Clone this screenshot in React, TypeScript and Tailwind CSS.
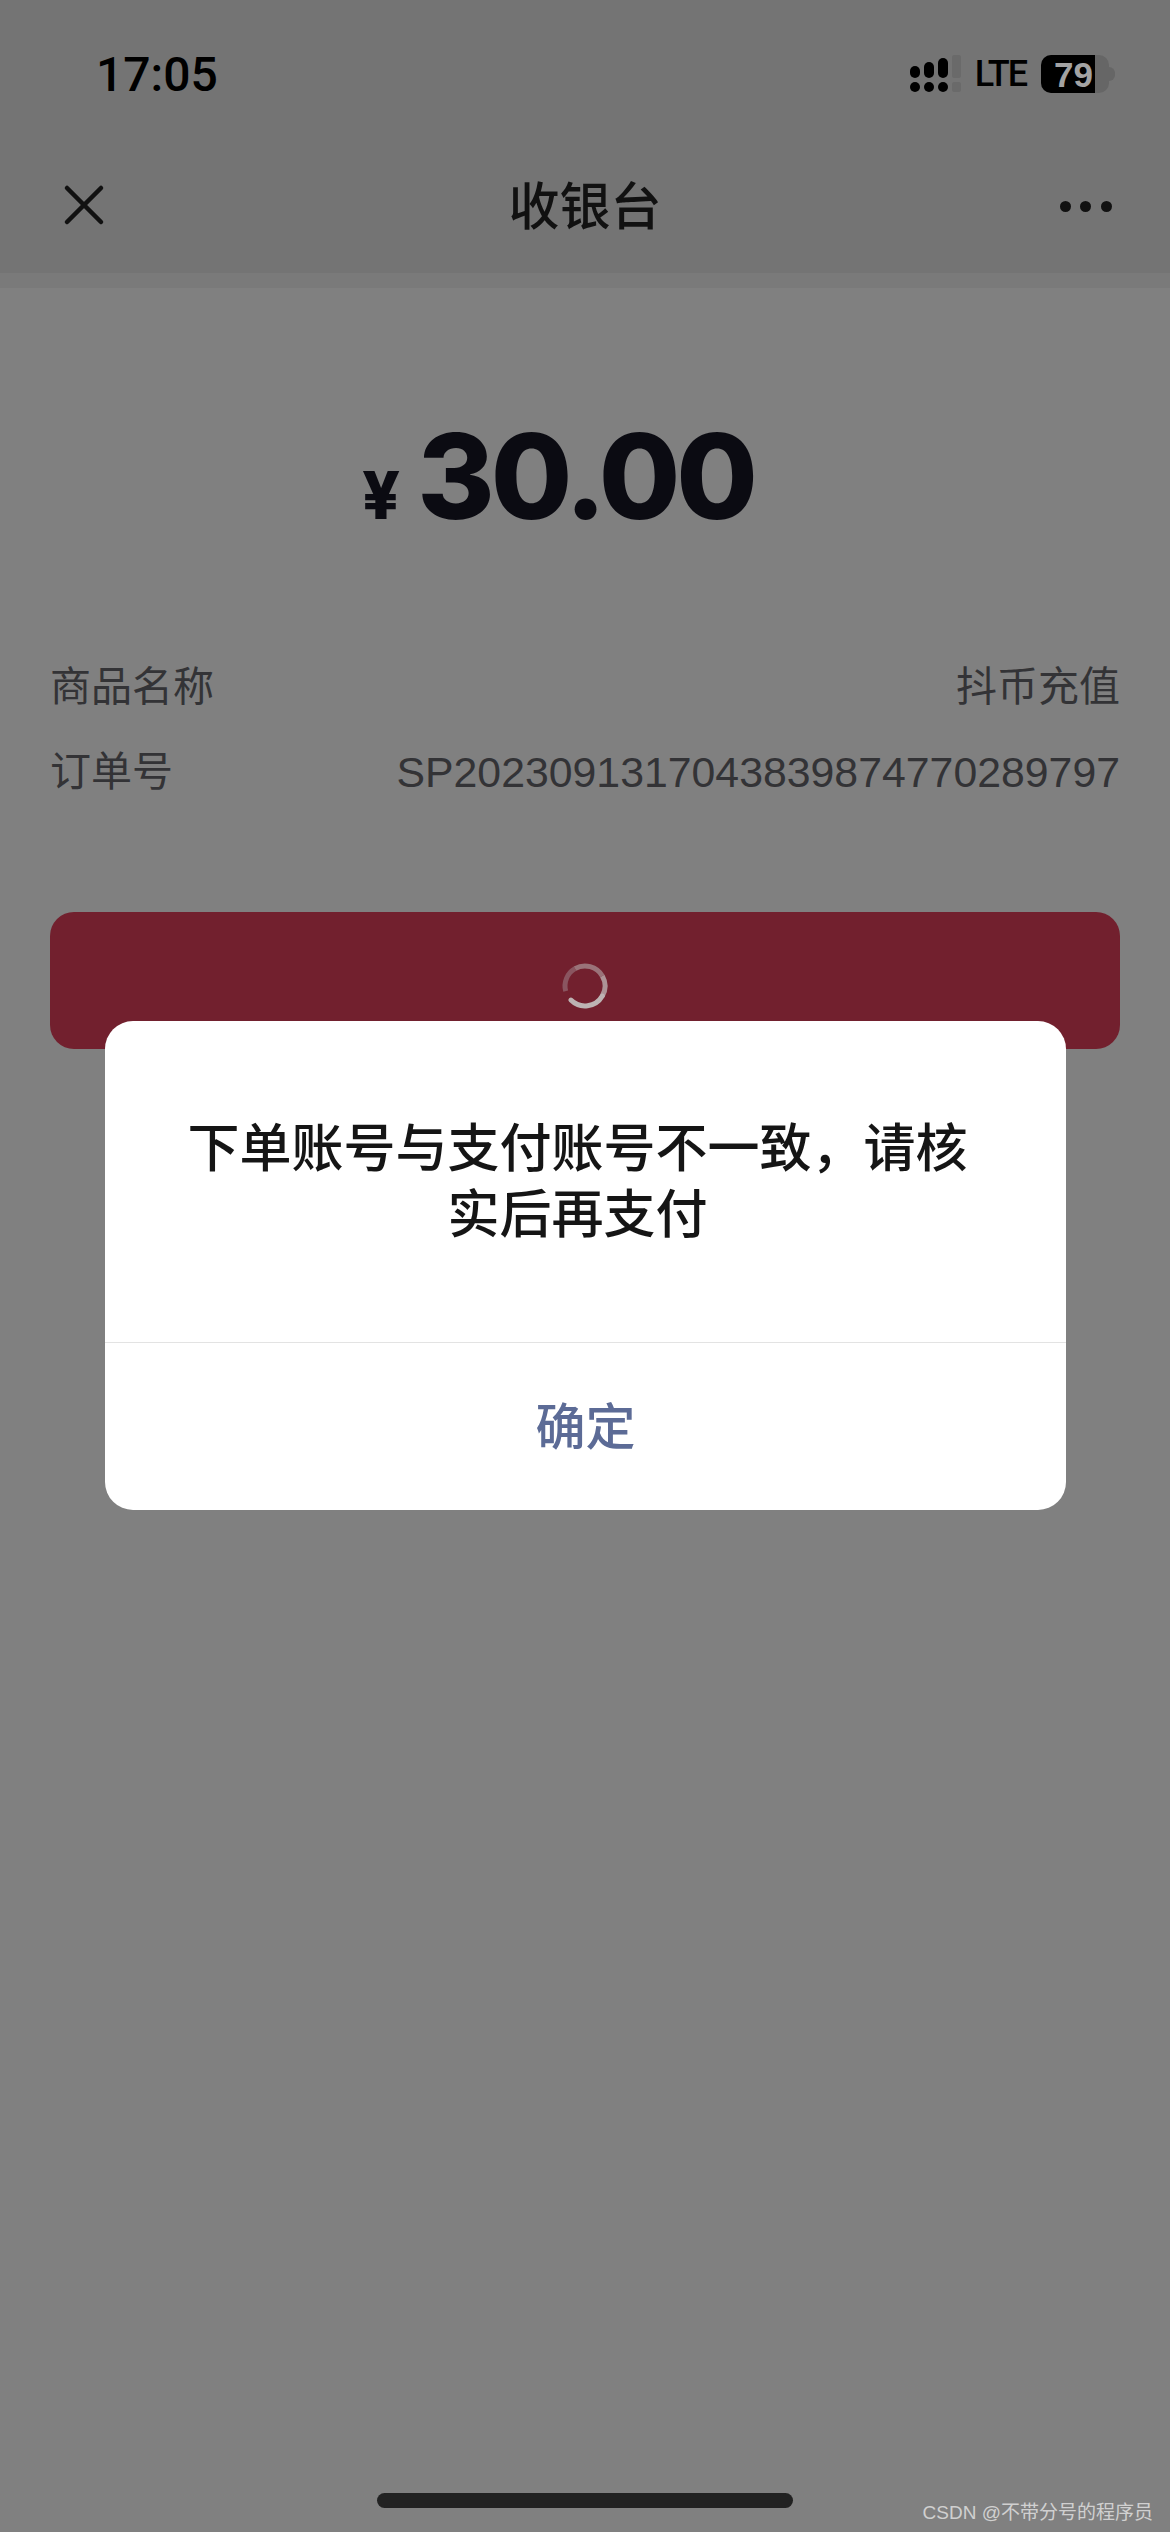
import React from 'react';
import { X } from 'lucide-react';

const cjk = "font-['Liberation_Sans','Noto_Sans_CJK_SC',sans-serif]";

const SignalIcon = () => (
  <svg width="52" height="38" viewBox="0 0 52 38" className="block">
    <rect x="0" y="11" width="10" height="12" rx="5" fill="#000" />
    <rect x="14" y="7" width="10" height="16" rx="5" fill="#000" />
    <rect x="28" y="3" width="10" height="20" rx="5" fill="#000" />
    <rect x="42" y="0" width="9" height="23" rx="2" fill="#6a6a6a" />
    <circle cx="5" cy="32" r="5" fill="#000" />
    <circle cx="19" cy="32" r="5" fill="#000" />
    <circle cx="33" cy="32" r="5" fill="#000" />
    <rect x="42" y="27" width="9" height="10" rx="2" fill="#6a6a6a" />
  </svg>
);

const Battery = () => (
  <div className="flex items-center">
    <div className="relative flex h-[38px] w-[68px] overflow-hidden rounded-[10px] bg-[#666666]">
      <div className="flex w-[54px] items-center justify-end bg-black pr-[2px]">
        <span className="text-[35px] leading-none font-bold text-[#a3a3a3]">79</span>
      </div>
    </div>
    <div className="h-[14px] w-[6px] rounded-r-full bg-[#666666]" />
  </div>
);

// the arc fades from the bright head at lower left round to the dim tail on the left
const Spinner = () => (
  <svg width="48" height="48" viewBox="0 0 48 48" fill="none" strokeWidth="5" className="block">
    <path d="M4.700 29.200A20 20 0 0 1 14 6.700" stroke="#8a5560" />
    <path d="M14 6.700A20 20 0 0 1 41.300 14" stroke="#9a7379" />
    <path d="M41.300 14A20 20 0 0 1 41.300 34" stroke="#ad9396" />
    <path d="M41.300 34A20 20 0 0 1 9.900 38.100" stroke="#bdb3b3" strokeLinecap="round" />
  </svg>
);

const InfoRow = ({ label, value, className, valueClass }: { label: string; value: string; className: string; valueClass: string }) => (
  <div className={`flex items-center justify-between text-[41px] leading-[50px] text-[#333336] ${className}`}>
    <span>{label}</span>
    <span className={valueClass}>{value}</span>
  </div>
);

export default function App() {
  return (
    <div className={`relative flex h-[2532px] w-[1170px] flex-col overflow-hidden bg-[#808080] ${cjk}`}>
      {/* Header */}
      <header className="h-[273px] bg-[#747474]">
        <div className="flex h-[150px] items-start justify-between pt-[50px] pr-[55px] pl-[96px]">
          <span className="font-['Roboto'] text-[48px] leading-[50px] font-medium text-black">17:05</span>
          <div className="flex items-center pt-[5px]">
            <SignalIcon />
            <span className="mr-[15px] ml-[13px] font-['Roboto'] text-[36px] leading-[38px] font-medium tracking-[-2px] text-black">LTE</span>
            <Battery />
          </div>
        </div>
        <div className="flex h-[110px] items-center justify-between pr-[58px] pl-[50px]">
          <X size={68} strokeWidth={1.6} color="#111111" />
          <span className="mt-[6px] mr-[8px] text-[51px] leading-[60px] font-medium text-[#111111]">收银台</span>
          <div className="mt-[3px] flex w-[52px] justify-between">
            <span className="h-[11px] w-[11px] rounded-full bg-[#111111]" />
            <span className="h-[11px] w-[11px] rounded-full bg-[#111111]" />
            <span className="h-[11px] w-[11px] rounded-full bg-[#111111]" />
          </div>
        </div>
      </header>
      <div className="h-[15px] bg-[#7a7a7a]" />

      {/* Amount */}
      <div className="mt-[133px] flex h-[110px] items-baseline justify-center pr-[54px] font-['Inter'] font-extrabold text-[#0b0b12]">
        <span className="mr-[17px] text-[66px] leading-none">¥</span>
        <span className="text-[118px] leading-[110px] tracking-[-4px]">30.00</span>
      </div>

      {/* Order info */}
      <div className="px-[50px] pt-[131px]">
        <InfoRow label="商品名称" value="抖币充值" className="" valueClass="" />
        <InfoRow label="订单号" value="SP2023091317043839874770289797" className="mt-[35px]" valueClass="text-[42.8px]" />
        <div className="mt-[115px] flex h-[137px] justify-center rounded-[24px] bg-[#72202e] pt-[50px]">
          <Spinner />
        </div>
      </div>

      {/* Home indicator */}
      <div className="absolute top-[2493px] left-[377px] h-[15px] w-[416px] rounded-full bg-[#222222]" />
      <span className="absolute top-[2500px] right-[17px] text-[19px] leading-[26px] text-[#d0d0d0]">CSDN @不带分号的程序员</span>

      {/* Dialog */}
      <div className="absolute top-[1021px] left-[105px] w-[961px] overflow-hidden rounded-[28px] bg-white">
        <div className="flex h-[321px] items-start justify-center pt-[95px] pr-[96px] pl-[80px] text-center text-[52px] leading-[66px] font-medium text-[#151515]">
          <p>下单账号与支付账号不一致，请核实后再支付</p>
        </div>
        <div className="flex h-[168px] items-center justify-center border-t border-[#e3e3e3] pt-[4px] text-[50px] font-medium text-[#5c6b96]">
          确定
        </div>
      </div>
    </div>
  );
}
